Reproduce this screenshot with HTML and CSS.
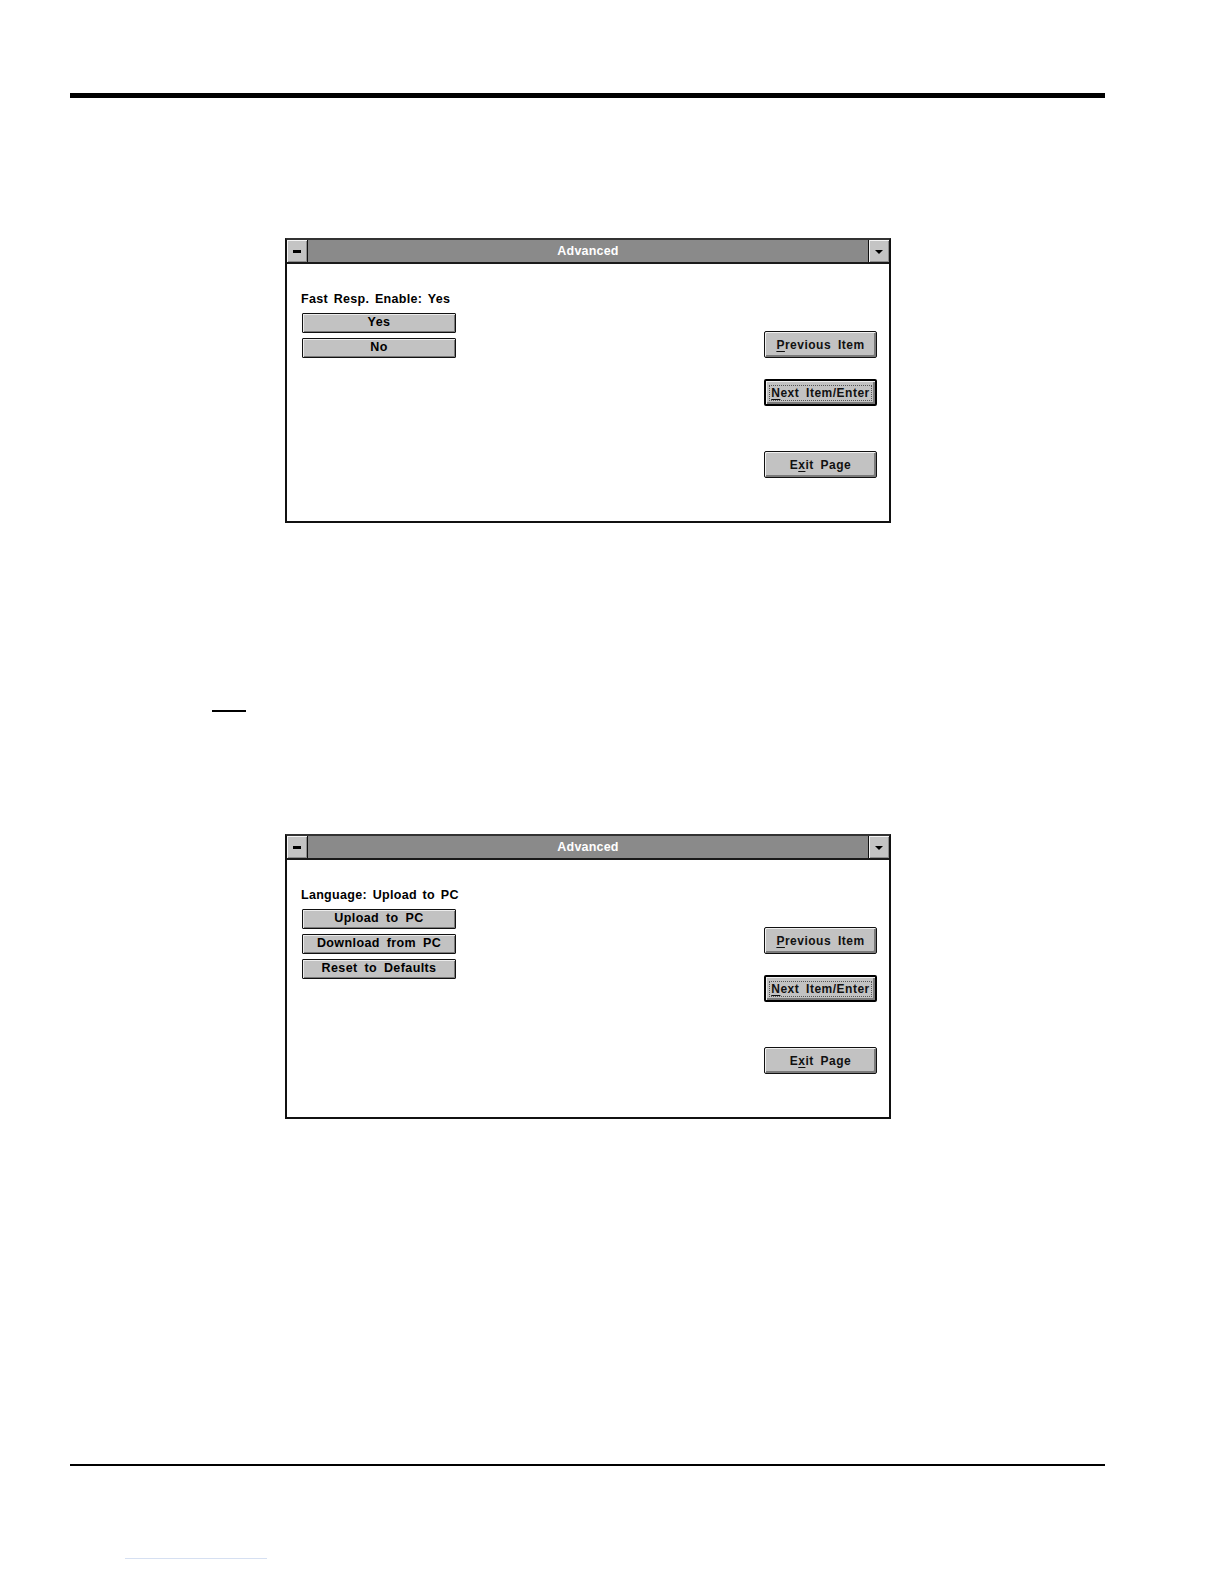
FILE: index.html
```html
<!DOCTYPE html>
<html>
<head>
<meta charset="utf-8">
<link rel="stylesheet" href="styles.css">
</head>
<body>
<div class="page">
  <div class="rule-top"></div>

  <div class="window win-first">
    <div class="titlebar">
      <div class="sysbox"><span class="dash"></span></div>
      <div class="title">Advanced</div>
      <div class="dropbox"><span class="tri"></span></div>
    </div>
    <div class="win-body">
      <div class="left-col">
        <div class="label">Fast Resp. Enable: Yes</div>
        <div class="opt">Yes</div>
        <div class="opt">No</div>
      </div>
      <div class="right-col">
        <div class="btn btn-prev"><span><u>P</u>revious Item</span></div>
        <div class="btn btn-next"><span class="focus"><u>N</u>ext Item/Enter</span></div>
        <div class="btn btn-exit"><span>E<u>x</u>it Page</span></div>
      </div>
    </div>
  </div>

  <div class="short-rule"></div>

  <div class="window win-second">
    <div class="titlebar">
      <div class="sysbox"><span class="dash"></span></div>
      <div class="title">Advanced</div>
      <div class="dropbox"><span class="tri"></span></div>
    </div>
    <div class="win-body">
      <div class="left-col">
        <div class="label">Language: Upload to PC</div>
        <div class="opt">Upload to PC</div>
        <div class="opt">Download from PC</div>
        <div class="opt">Reset to Defaults</div>
      </div>
      <div class="right-col">
        <div class="btn btn-prev"><span><u>P</u>revious Item</span></div>
        <div class="btn btn-next"><span class="focus"><u>N</u>ext Item/Enter</span></div>
        <div class="btn btn-exit"><span>E<u>x</u>it Page</span></div>
      </div>
    </div>
  </div>

  <div class="rule-bottom"></div>
  <div class="link-rule"></div>
</div>
</body>
</html>
```

FILE: styles.css
```css
html, body {
  margin: 0;
  padding: 0;
  background: #ffffff;
}

.page {
  padding-top: 93px;
  font-family: "Liberation Sans", Arial, sans-serif;
  color: #000;
}

.rule-top {
  margin-left: 70px;
  width: 1035px;
  height: 5px;
  background: #000;
}

.window {
  margin-left: 285px;
  width: 606px;
  height: 285px;
  box-sizing: border-box;
  border: 2px solid #111;
  border-top-color: #333;
  background: #fff;
  display: flex;
  flex-direction: column;
}

.win-first {
  margin-top: 140px;
}

.win-second {
  margin-top: 122px;
}

.titlebar {
  height: 24px;
  display: flex;
  background: #8a8a8a;
  border-bottom: 2px solid #1a1a1a;
  box-sizing: border-box;
}

.sysbox, .dropbox {
  width: 20px;
  background: #c4c4c4;
  box-shadow: inset 1px 1px 0 #f4f4f4, inset -1px -1px 0 #8c8c8c;
  display: flex;
  align-items: center;
  justify-content: center;
}

.sysbox {
  border-right: 1px solid #111;
}

.dropbox {
  border-left: 1px solid #111;
}

.dash {
  width: 8px;
  height: 3px;
  background: #000;
}

.tri {
  width: 0;
  height: 0;
  border-left: 4px solid transparent;
  border-right: 4px solid transparent;
  border-top: 4px solid #000;
  margin-top: 1px;
}

.title {
  flex: 1;
  text-align: center;
  color: #fff;
  font-size: 12.5px;
  font-weight: bold;
  line-height: 22px;
  letter-spacing: 0.2px;
}

.win-body {
  flex: 1;
  display: flex;
  justify-content: space-between;
  padding: 27px 12px 0 14px;
}

.left-col {
  width: 155px;
  display: flex;
  flex-direction: column;
  gap: 5px;
}

.label {
  font-size: 12.5px;
  font-weight: bold;
  line-height: 16px;
  word-spacing: 2px;
  letter-spacing: 0.3px;
  margin-bottom: 1px;
  white-space: nowrap;
}

.opt {
  margin-left: 1px;
  height: 20px;
  box-sizing: border-box;
  border: 1px solid #111;
  border-radius: 1px;
  background: #c2c2c2;
  box-shadow: inset 1px 1px 0 #ececec, inset -1px -1px 0 #7a7a7a;
  font-size: 12.5px;
  font-weight: bold;
  line-height: 17px;
  text-align: center;
  word-spacing: 3px;
  letter-spacing: 0.4px;
  white-space: nowrap;
}

.right-col {
  width: 113px;
  display: flex;
  flex-direction: column;
  padding-top: 40px;
}

.btn {
  height: 27px;
  box-sizing: border-box;
  border: 1px solid #111;
  border-radius: 2px;
  background: #c2c2c2;
  box-shadow: inset 1px 1px 0 #f0f0f0, inset -2px -2px 0 #7a7a7a;
  display: flex;
  align-items: center;
  justify-content: center;
  font-size: 12px;
  font-weight: bold;
  letter-spacing: 0.5px;
  word-spacing: 3px;
  white-space: nowrap;
  color: #111;
}

.btn u {
  text-decoration-thickness: 1px;
  text-underline-offset: 2px;
}

.btn-next {
  margin-top: 21px;
  border: 2px solid #000;
}

.btn-exit {
  margin-top: 45px;
}

.focus {
  outline: 1px dotted #555;
  outline-offset: 0;
  padding: 0 1px;
  line-height: 14px;
}

.short-rule {
  margin-top: 187px;
  margin-left: 212px;
  width: 34px;
  height: 2px;
  background: #000;
}

.rule-bottom {
  margin-top: 345px;
  margin-left: 70px;
  width: 1035px;
  height: 2px;
  background: #000;
}

.link-rule {
  margin-top: 92px;
  margin-left: 125px;
  width: 142px;
  height: 1px;
  background: #d6e0f2;
}
```
